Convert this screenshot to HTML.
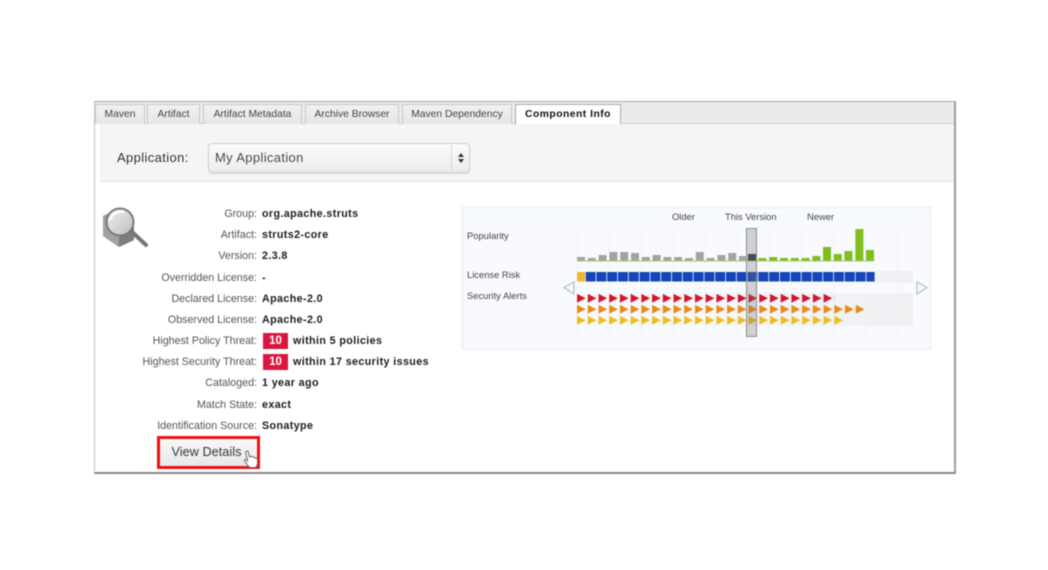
<!DOCTYPE html>
<html><head><meta charset="utf-8"><style>
html,body{margin:0;padding:0;background:#fff}
body{width:1048px;height:570px;position:relative;overflow:hidden;font-family:"Liberation Sans",sans-serif}
#w{position:absolute;left:0;top:0;width:1048px;height:570px;filter:blur(.6px)}
#w div{position:absolute;box-sizing:border-box}
.frame{left:94px;top:101px;width:862px;height:373px;background:#fff;border:1px solid #c4c4c4;border-bottom:2px solid #8a8a8a;border-right:2px solid #9a9a9a;border-top:1px solid #a8a8a8}
.tabbar{left:95px;top:102px;width:859px;height:22px;background:#ebebeb;border-bottom:1px solid #cfcfcf}
.tab{top:104px;height:20px;background:linear-gradient(#f1f1f1,#e6e6e6);border:1px solid #c8c8c8;border-bottom:0;font-size:10.3px;color:#444;line-height:19px;text-align:center;white-space:nowrap}
.tab.on{background:#fff;color:#111;font-weight:bold;border-color:#aaa;height:21px;letter-spacing:.5px}
.bar{left:100px;top:124px;width:854px;height:58px;background:#f5f5f5;border-bottom:1px solid #e6e6e6}
.lab{left:117px;top:150px;font-size:13px;color:#333;line-height:16px;letter-spacing:.38px}
.sel{left:208px;top:143px;width:262px;height:30px;border:1px solid #cfcfcf;border-radius:4px;background:linear-gradient(#fbfbfb,#ececec);box-shadow:0 1px 1px #ddd;font-size:13px;color:#4a4a4a;line-height:27px;padding-left:6px;letter-spacing:.35px}
.sep{left:451px;top:145px;width:1px;height:26px;background:#d8d8d8}
.k,.v{font-size:10.7px;line-height:14px;white-space:nowrap}
.k{right:791px;color:#555}
.v{left:262px;color:#1c1c1c;font-weight:bold;font-size:10.7px;letter-spacing:.4px}
.b{left:263px;width:25px;height:16px;background:#d8173f;color:#fff;font-size:11.5px;font-weight:bold;text-align:center;line-height:16px}
.btn{left:157px;top:436px;width:103px;height:33px;border:3px solid #ee1111;background:linear-gradient(#f8f8f8,#e8e8e8);font-size:12.6px;color:#34343e;line-height:26px;padding-left:11.5px;letter-spacing:.08px}
.chart{left:462px;top:207px;width:469px;height:143px;background:#f8fafd;border:1px solid #e6ebf0}
.c{font-size:9.4px;color:#444;line-height:12px;white-space:nowrap}
</style></head><body><div id="w">
<div class="frame"></div>
<div class="tabbar"></div>
<div class="tab" style="left:95px;width:50px">Maven</div>
<div class="tab" style="left:147px;width:53px">Artifact</div>
<div class="tab" style="left:203px;width:99px">Artifact Metadata</div>
<div class="tab" style="left:305px;width:94px">Archive Browser</div>
<div class="tab" style="left:402px;width:110px">Maven Dependency</div>
<div class="tab on" style="left:515px;width:106px">Component Info</div>
<div class="bar"></div>
<div class="lab">Application:</div>
<div class="sel">My Application</div>
<div class="sep"></div>
<svg style="position:absolute;left:458px;top:153px" width="6" height="10"><path d="M3 0L6 4H0Z M3 10L6 6H0Z" fill="#333"/></svg>

<svg style="position:absolute;left:100px;top:202px" width="52" height="50" viewBox="0 0 52 50">
<defs><linearGradient id="g1" x1="0" y1="0" x2="1" y2="1"><stop offset="0" stop-color="#f2f2f2"/><stop offset="1" stop-color="#bdbdbd"/></linearGradient></defs>
<path d="M3 14L17 7L34 17V38L19 45L3 34Z" fill="#9a9a9a"/>
<path d="M3 14L19 23V45L3 34Z" fill="#a2a2a2"/>
<path d="M19 23L34 17V38L19 45Z" fill="#7d7d7d"/>
<path d="M31 29L46 43" stroke="#777" stroke-width="4" stroke-linecap="round"/>
<circle cx="20" cy="20" r="13.5" fill="url(#g1)" stroke="#7a7a7a" stroke-width="2"/>
<path d="M10 18C12 12 17 9 24 10" stroke="#fff" stroke-width="2.5" fill="none"/>
</svg>

<div class="k" style="top:207px">Group:</div><div class="v" style="top:207px">org.apache.struts</div>
<div class="k" style="top:228px">Artifact:</div><div class="v" style="top:228px">struts2-core</div>
<div class="k" style="top:249px">Version:</div><div class="v" style="top:249px">2.3.8</div>
<div class="k" style="top:271px">Overridden License:</div><div class="v" style="top:271px">-</div>
<div class="k" style="top:292px">Declared License:</div><div class="v" style="top:292px">Apache-2.0</div>
<div class="k" style="top:313px">Observed License:</div><div class="v" style="top:313px">Apache-2.0</div>
<div class="k" style="top:334px">Highest Policy Threat:</div><div class="b" style="top:333px">10</div><div class="v" style="top:334px;left:293px">within 5 policies</div>
<div class="k" style="top:355px">Highest Security Threat:</div><div class="b" style="top:354px">10</div><div class="v" style="top:355px;left:293px">within 17 security issues</div>
<div class="k" style="top:376px">Cataloged:</div><div class="v" style="top:376px">1 year ago</div>
<div class="k" style="top:398px">Match State:</div><div class="v" style="top:398px">exact</div>
<div class="k" style="top:419px">Identification Source:</div><div class="v" style="top:419px">Sonatype</div>
<div class="btn">View Details</div>
<svg style="position:absolute;left:243px;top:450px" width="16" height="19" viewBox="0 0 16 19"><path d="M3 1.5C4 .8 5 1 5.3 2L6.5 7C7.5 6 9 6.3 9.5 7C10.5 6.5 11.5 7 12 8C13 7.8 14.5 8.5 14.5 10V14L13 17.5H6.5L1.5 11C1 10 2 9 3.3 9.7L4.5 11L2.8 3C2.7 2.4 2.7 1.8 3 1.5Z" fill="#fff" stroke="#666" stroke-width="1"/></svg>

<div class="chart"></div>
<div class="c" style="left:672px;top:211px">Older</div>
<div class="c" style="left:725px;top:211px">This Version</div>
<div class="c" style="left:807px;top:211px">Newer</div>
<div class="c" style="left:467px;top:230px">Popularity</div>
<div class="c" style="left:467px;top:269px">License Risk</div>
<div class="c" style="left:467px;top:290px">Security Alerts</div>

<svg style="position:absolute;left:0;top:0" width="1048" height="570">
<defs>
<linearGradient id="fade" x1="0" y1="0" x2="1" y2="0"><stop offset="0" stop-color="#f1f2f4" stop-opacity="0"/><stop offset=".55" stop-color="#f1f2f4" stop-opacity=".6"/><stop offset="1" stop-color="#eff0f2"/></linearGradient>
<pattern id="gr" x="577" y="228" width="32" height="108" patternUnits="userSpaceOnUse"><rect width="1" height="108" fill="#f1f4f7"/></pattern>
<pattern id="bl" x="585.6" y="271" width="10.8" height="11" patternUnits="userSpaceOnUse"><rect width="10" height="11" fill="#1546b8"/></pattern>
<pattern id="rd" x="577" y="293" width="10.72" height="11" patternUnits="userSpaceOnUse"><path d="M.4 1.4L8 5.3L.4 9.2Z" fill="#d5152f" stroke="#d5152f" stroke-width=".7"/></pattern>
<pattern id="or" x="577" y="304" width="10.72" height="11" patternUnits="userSpaceOnUse"><path d="M.4 1.4L8 5.3L.4 9.2Z" fill="#e98a1b" stroke="#e98a1b" stroke-width=".7"/></pattern>
<pattern id="ye" x="577" y="315" width="10.72" height="11" patternUnits="userSpaceOnUse"><path d="M.4 1.4L8 5.3L.4 9.2Z" fill="#ebbd21" stroke="#ebbd21" stroke-width=".7"/></pattern>
</defs>
<rect x="577" y="228" width="336" height="108" fill="url(#gr)"/>
<rect x="577" y="271" width="336" height="12" fill="url(#fade)"/>
<rect x="577" y="293" width="336" height="33" fill="url(#fade)"/>
<path d="M574 282L564 287.5L574 294Z" fill="#f8fafd" stroke="#b5bcc4" stroke-width="1.2"/>
<path d="M917 282L927 287.5L917 294Z" fill="#f8fafd" stroke="#b5bcc4" stroke-width="1.2"/>
<g fill="#a3a3a3">
<rect x="577" y="257" width="8" height="4"/><rect x="587.8" y="258" width="8" height="3"/><rect x="598.6" y="255" width="8" height="6"/><rect x="609.4" y="252" width="8" height="9"/><rect x="620.2" y="252" width="8" height="9"/><rect x="631" y="253" width="8" height="8"/><rect x="641.8" y="257" width="8" height="4"/><rect x="652.6" y="255" width="8" height="6"/><rect x="663.4" y="257" width="8" height="4"/><rect x="674.2" y="257" width="8" height="4"/><rect x="685" y="258" width="8" height="3"/><rect x="695.8" y="252" width="8" height="9"/><rect x="706.6" y="258" width="8" height="3"/><rect x="717.4" y="255" width="8" height="6"/><rect x="728.2" y="253" width="8" height="8"/><rect x="739" y="256" width="8" height="5"/>
</g>
<rect x="748" y="254" width="8" height="7" fill="#3c3c3c"/>
<g fill="#7fbe1e">
<rect x="758.4" y="258" width="8" height="3"/><rect x="769.2" y="257" width="8" height="4"/><rect x="780" y="258" width="8" height="3"/><rect x="790.8" y="258" width="8" height="3"/><rect x="801.6" y="258" width="8" height="3"/><rect x="812.4" y="256" width="8" height="5"/><rect x="823" y="247" width="8" height="14"/><rect x="833.8" y="254" width="8" height="7"/><rect x="844.4" y="251" width="8" height="10"/><rect x="855.4" y="229" width="8" height="32"/><rect x="866" y="250" width="8" height="11"/>
</g>
<rect x="577" y="260.5" width="297" height="1" fill="#a9c96a"/>
<rect x="577" y="272" width="8" height="9.5" fill="#f2b632"/>
<rect x="585.6" y="272" width="289" height="9.5" fill="url(#bl)"/>
<rect x="577" y="293" width="257.3" height="11" fill="url(#rd)"/>
<rect x="577" y="304" width="289.4" height="11" fill="url(#or)"/>
<rect x="577" y="315" width="268" height="11" fill="url(#ye)"/>
<rect x="746.5" y="228.5" width="10" height="108" fill="#6f7070" fill-opacity=".3" stroke="#8a8f8f"/>
</svg>
</div></body></html>
